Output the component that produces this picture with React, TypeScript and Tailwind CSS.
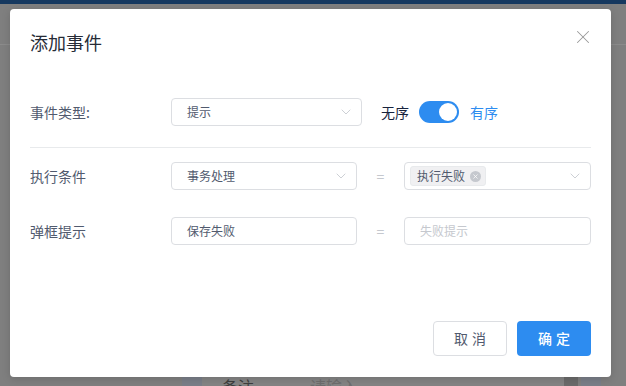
import { ChevronDown, X } from "lucide-react";

const font = "font-['Noto_Sans_CJK_SC','Liberation_Sans',sans-serif]";

function Select({ value, width }: { value: string; width: string }) {
    return (
        <div className={`${width} h-[28px] flex items-center justify-between pl-[15px] pr-[7px] border border-[#dcdee2] rounded-[4px] bg-white`}>
            <span className="text-[12px] text-[#515a6e]">{value}</span>
            <ChevronDown className="w-[16px] h-[16px] text-[#c5c8ce]" strokeWidth={1.3} />
        </div>
    );
}

function Input({ value, placeholder }: { value?: string; placeholder?: string }) {
    return (
        <div className="w-[187px] h-[28px] flex items-center px-[15px] border border-[#dcdee2] rounded-[4px] bg-white">
            {value ? (
                <span className="text-[12px] text-[#515a6e]">{value}</span>
            ) : (
                <span className="text-[12px] text-[#c5c8ce]">{placeholder}</span>
            )}
        </div>
    );
}

function Equals() {
    return <div className="w-[47px] text-center text-[14px] text-[#c5c8ce]">=</div>;
}

export default function App() {
    return (
        <div className={`relative w-[626px] h-[386px] overflow-hidden bg-[#7f7f7f] ${font}`}>
            {/* page behind the mask */}
            <div className="flex flex-col h-full">
                <div className="h-[4px] bg-[#15385f]" />
                <div className="h-[40px]" />
                <div className="h-px bg-[#8b8b8b]" />
                <div className="flex-1" />
                <div className="h-[9px] flex">
                    <div className="w-[182px]" />
                    <div className="w-[20px] bg-[#7a7e88]" />
                    <div className="w-[362px] bg-[#848484] relative overflow-hidden">
                        <span className="absolute left-[20px] top-[1px] text-[16px] text-[#3e3e3e] leading-none">备注</span>
                        <span className="absolute left-[108px] top-[1px] text-[16px] text-[#6e6e6e] leading-none">请输入</span>
                    </div>
                    <div className="w-[14px] bg-[#6b6b6b]" />
                    <div className="w-[3px]" />
                    <div className="w-[20px] bg-[#7a7e88]" />
                </div>
            </div>

            {/* modal */}
            <div className="absolute left-[10px] top-[9px] w-[601px] h-[368px] bg-white rounded-[4px] shadow-[0_2px_8px_rgba(0,0,0,0.15)] flex flex-col px-[20px]">
                <div className="pt-[21px] flex items-center justify-between">
                    <h2 className="text-[18px] leading-[24px] text-[#262b36]">添加事件</h2>
                    <X className="w-[22px] h-[22px] text-[#999] mr-[-3px] mt-[-10px]" strokeWidth={1.1} />
                </div>

                <div className="mt-[44px] flex items-center h-[28px]">
                    <div className="w-[141px] text-[14px] text-[#515a6e]">事件类型:</div>
                    <Select value="提示" width="w-[191px]" />
                    <span className="ml-[19px] text-[14px] text-[#17233d]">无序</span>
                    <div className="ml-[10px] w-[40px] h-[22px] rounded-full bg-[#2d8cf0] flex items-center justify-end pr-[2px]">
                        <div className="w-[18px] h-[18px] rounded-full bg-white" />
                    </div>
                    <span className="ml-[11px] text-[14px] text-[#2d8cf0]">有序</span>
                </div>

                <div className="mt-[21px] h-px bg-[#e8eaec]" />

                <div className="mt-[14px] flex items-center h-[28px]">
                    <div className="w-[141px] text-[14px] text-[#515a6e]">执行条件</div>
                    <Select value="事务处理" width="w-[186px]" />
                    <Equals />
                    <div className="w-[187px] h-[28px] flex items-center justify-between pl-[5px] pr-[7px] border border-[#dcdee2] rounded-[4px]">
                        <div className="h-[20px] flex items-center gap-[5px] pl-[6px] pr-[4px] bg-[#f0f0f2] border border-[#e8eaec] rounded-[3px]">
                            <span className="text-[12px] text-[#515a6e]">执行失败</span>
                            <span className="w-[11px] h-[11px] rounded-full bg-[#c5c8ce] flex items-center justify-center">
                                <X className="w-[7px] h-[7px] text-white" strokeWidth={2.5} />
                            </span>
                        </div>
                        <ChevronDown className="w-[16px] h-[16px] text-[#c5c8ce]" strokeWidth={1.3} />
                    </div>
                </div>

                <div className="mt-[27px] flex items-center h-[28px]">
                    <div className="w-[141px] text-[14px] text-[#515a6e]">弹框提示</div>
                    <div className="w-[186px] h-[28px] flex items-center px-[15px] border border-[#dcdee2] rounded-[4px]">
                        <span className="text-[12px] text-[#515a6e]">保存失败</span>
                    </div>
                    <Equals />
                    <Input placeholder="失败提示" />
                </div>

                <div className="flex-1" />

                <div className="pb-[21px] flex justify-end gap-[10px]">
                    <button className="w-[74px] h-[35px] rounded-[4px] border border-[#dcdee2] bg-white text-[14px] text-[#515a6e] tracking-[4px] pl-[4px]">
                        取消
                    </button>
                    <button className="w-[74px] h-[35px] rounded-[4px] bg-[#2d8cf0] text-[14px] text-white font-medium tracking-[4px] pl-[4px]">
                        确定
                    </button>
                </div>
            </div>
        </div>
    );
}
